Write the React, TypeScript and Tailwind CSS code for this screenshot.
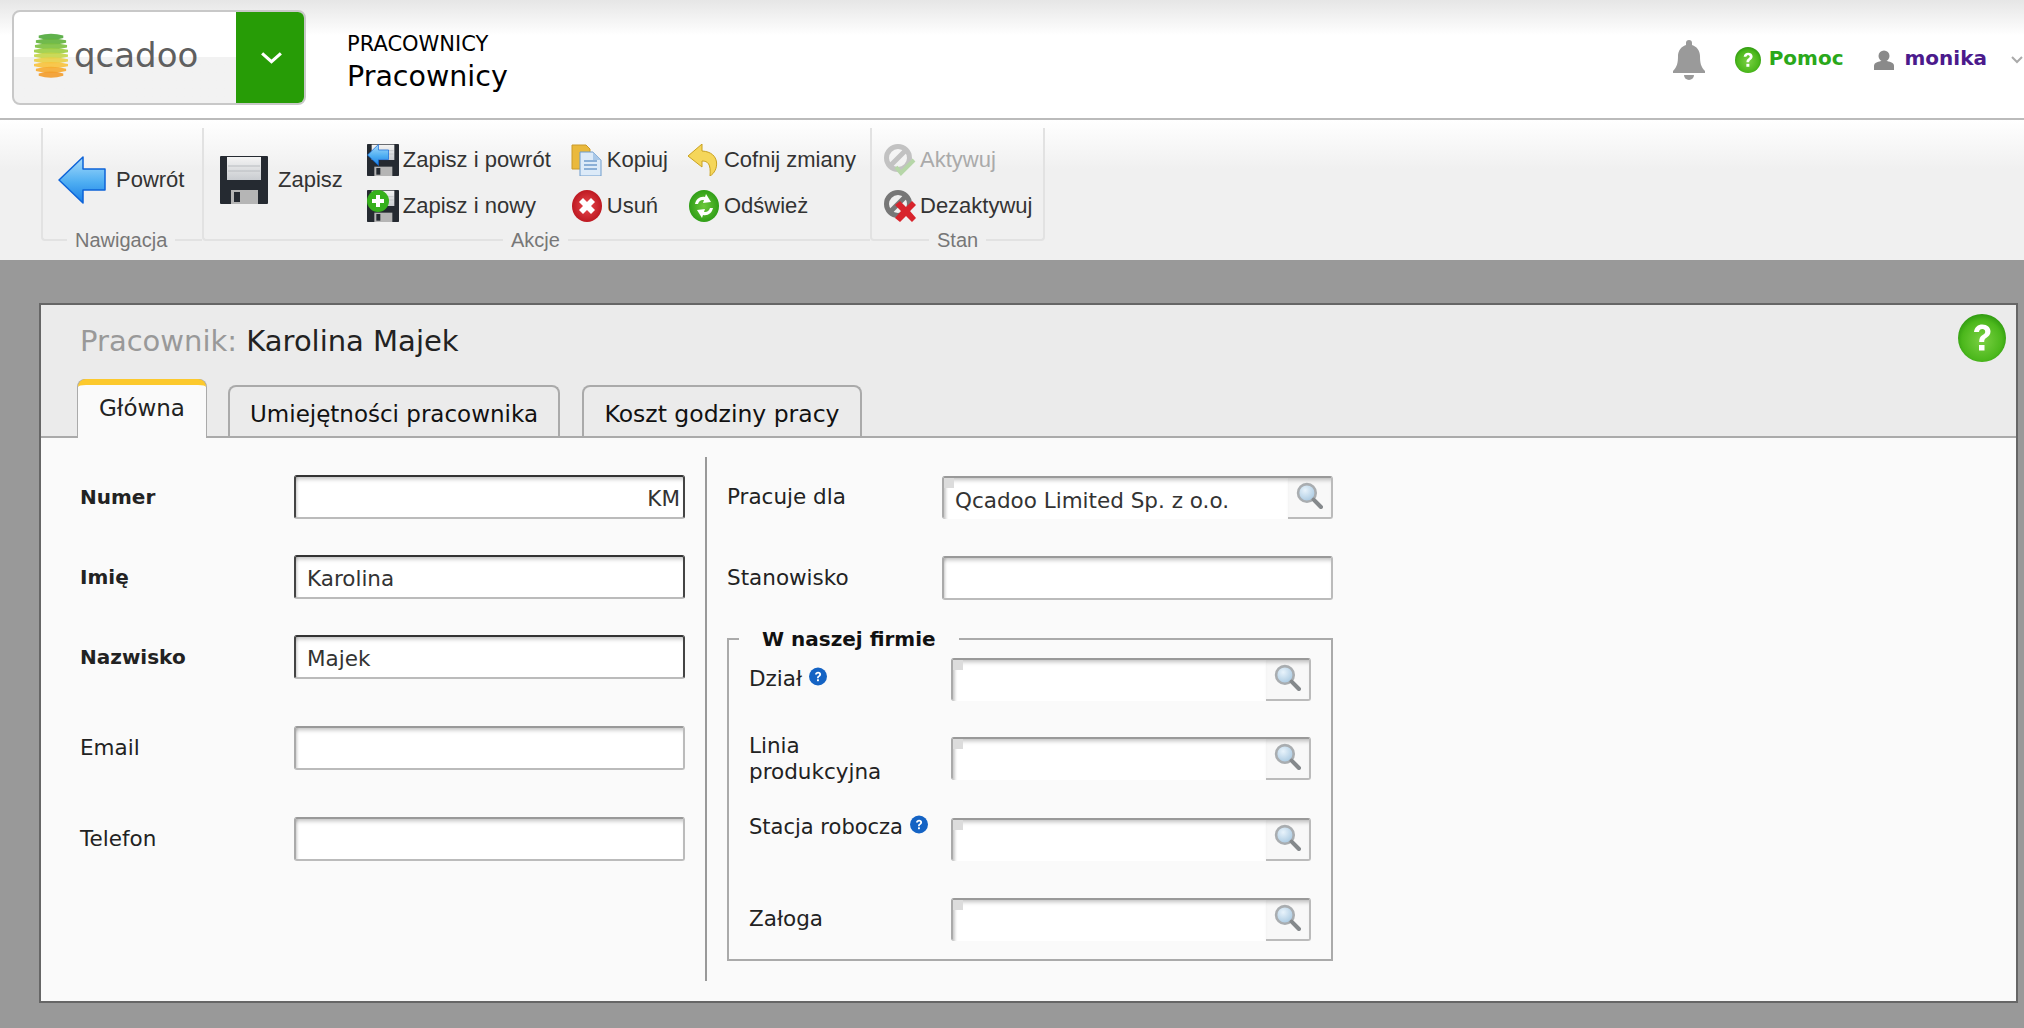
import React from "react";

const dejavu = "font-['DejaVu_Sans',sans-serif]";

function GreenHelp({ className }: { className: string }) {
  return (
    <svg viewBox="0 0 48 48" className={className}>
      <defs>
        <radialGradient id="gh" cx="50%" cy="55%" r="55%">
          <stop offset="0%" stopColor="#7ad043" />
          <stop offset="75%" stopColor="#4cb81c" />
          <stop offset="100%" stopColor="#2f9a10" />
        </radialGradient>
      </defs>
      <circle cx="24" cy="24" r="24" fill="url(#gh)" />
      <path d="M16 18c.6-5 4-7.500 8.300-7.500 5 0 8.200 3 8.200 7 0 3-1.700 4.700-4 6.300-1.800 1.200-2.300 2-2.300 4.200h-5c0-3.500.8-5.200 3.400-7 1.900-1.300 2.600-2 2.600-3.300 0-1.500-1.200-2.600-2.900-2.600-1.900 0-3 1.100-3.300 3z" fill="#fff" />
      <rect x="21" y="31" width="5.500" height="5.500" fill="#fff" />
    </svg>
  );
}

function BlueHelp() {
  return (
    <svg viewBox="0 0 18 18" className="relative -top-[4px] inline-block h-[19px] w-[18px]">
      <circle cx="9" cy="9" r="9" fill="#1463c4" />
      <path d="M6 7c.2-1.800 1.500-2.800 3.100-2.800 1.800 0 3 1.100 3 2.600 0 1.100-.6 1.800-1.500 2.400-.7.400-.8.700-.8 1.500H8c0-1.300.3-1.900 1.200-2.500.7-.500 1-.8 1-1.300 0-.6-.5-1-1.100-1-.7 0-1.100.4-1.200 1.100z" fill="#fff" />
      <rect x="8" y="11.800" width="1.900" height="1.900" fill="#fff" />
    </svg>
  );
}

function Floppy({ className, uid }: { className: string; uid: string }) {
  return (
    <svg viewBox="0 0 48 48" className={className}>
      <defs>
        <linearGradient id={uid} x1="0" y1="0" x2="0" y2="1">
          <stop offset="0%" stopColor="#f4f4f4" />
          <stop offset="100%" stopColor="#c9ccd0" />
        </linearGradient>
      </defs>
      <path d="M1 0h46a1 1 0 0 1 1 1v46a1 1 0 0 1-1 1H1a1 1 0 0 1-1-1V1a1 1 0 0 1 1-1z" fill="#252a31" />
      <rect x="7" y="1" width="34" height="23" fill={`url(#${uid})`} />
      <path d="M8 10h32M8 15h32" stroke="#b9bcc0" strokeWidth="1" />
      <rect x="11" y="34" width="27" height="14" fill="#b5b5b5" />
      <rect x="14" y="36" width="6" height="10" fill="#252a31" />
    </svg>
  );
}

function BlueArrow({ className, uid }: { className: string; uid: string }) {
  return (
    <svg viewBox="0 0 48 48" className={className}>
      <defs>
        <linearGradient id={uid} x1="0" y1="0" x2="0" y2="1">
          <stop offset="0%" stopColor="#a8dcfb" />
          <stop offset="55%" stopColor="#4eaef2" />
          <stop offset="100%" stopColor="#1a7fe6" />
        </linearGradient>
      </defs>
      <path d="M25 1 L1 24 L25 47 V34 H47 V13 H25 Z" fill={`url(#${uid})`} stroke="#0d63d8" strokeWidth="1.500" strokeLinejoin="round" />
    </svg>
  );
}

function SaveBack() {
  return (
    <span className="relative block h-8 w-8">
      <Floppy className="h-8 w-8" uid="f1" />
      <span className="absolute left-0 top-0">
        <BlueArrow className="h-[22px] w-[22px]" uid="a1" />
      </span>
    </span>
  );
}

function SaveNew() {
  return (
    <span className="relative block h-8 w-8">
      <Floppy className="h-8 w-8" uid="f2" />
      <svg viewBox="0 0 22 22" className="absolute left-0 top-0 h-[22px] w-[22px]">
        <circle cx="11" cy="11" r="11" fill="#36b01c" />
        <path d="M9 5h4v4h4v4h-4v4H9v-4H5V9h4z" fill="#fff" />
      </svg>
    </span>
  );
}

function CopyIcon() {
  return (
    <svg viewBox="0 0 32 32" className="h-8 w-8">
      <path d="M1 1h14l4 4v20H1z" fill="#eab93c" stroke="#c99a2a" />
      <path d="M9 8h13l8 8v16H9z" fill="#dceaf8" stroke="#6f9ccc" />
      <path d="M22 8v8h8z" fill="#a9c8e8" />
      <path d="M13 17h13M13 21h13M13 25h13" stroke="#6f9ccc" strokeWidth="1.500" />
    </svg>
  );
}

function DeleteIcon() {
  return (
    <svg viewBox="0 0 32 32" className="h-8 w-8">
      <defs>
        <radialGradient id="del" cx="50%" cy="50%" r="55%">
          <stop offset="0%" stopColor="#ea4a4f" />
          <stop offset="100%" stopColor="#b9141d" />
        </radialGradient>
      </defs>
      <ellipse cx="16" cy="16" rx="15" ry="16" fill="url(#del)" />
      <path d="M8 12l4-4 4 4 4-4 4 4-4 4 4 4-4 4-4-4-4 4-4-4 4-4z" fill="#fff" />
    </svg>
  );
}

function UndoIcon() {
  return (
    <svg viewBox="0 0 32 32" className="h-8 w-8">
      <path d="M14 0 L0 12 L14 23 V17 C20 17 23 20 22 32 C31 27 33 8 14 7 Z" fill="#f5d65a" stroke="#c9a11f" strokeLinejoin="round" />
    </svg>
  );
}

function RefreshIcon() {
  return (
    <svg viewBox="0 0 32 32" className="h-8 w-8">
      <defs>
        <radialGradient id="ref" cx="50%" cy="50%" r="55%">
          <stop offset="0%" stopColor="#6cc83a" />
          <stop offset="100%" stopColor="#2a9a14" />
        </radialGradient>
      </defs>
      <ellipse cx="16" cy="16" rx="15" ry="16" fill="url(#ref)" />
      <path d="M7 14c1-5 5-8 10-7l1-3 5 8-8 1 1-3c-3-.5-5 1-6 4zM25 18c-1 5-5 8-10 7l-1 3-5-8 8-1-1 3c3 .5 5-1 6-4z" fill="#fff" />
    </svg>
  );
}

function ActivateIcon() {
  return (
    <svg viewBox="0 0 32 32" className="h-8 w-8">
      <circle cx="14" cy="14" r="11.500" fill="none" stroke="#c2c2c2" strokeWidth="5" />
      <path d="M6 22L22 6" stroke="#c2c2c2" strokeWidth="5" />
      <path d="M12 23l5 6 13-13" fill="none" stroke="#b6d6a8" strokeWidth="4" />
    </svg>
  );
}

function DeactivateIcon() {
  return (
    <svg viewBox="0 0 32 32" className="h-8 w-8">
      <circle cx="14" cy="14" r="11.500" fill="none" stroke="#777" strokeWidth="5" />
      <path d="M6 22L22 6" stroke="#777" strokeWidth="5" />
      <path d="M11 15l5-4 6 6 6-6 4 4-6 6 6 7-4 4-6-6-6 6-5-4 6-7z" fill="#d8242c" />
    </svg>
  );
}

function SearchIcon() {
  return (
    <svg viewBox="0 0 26 26" className="h-[27px] w-[27px]">
      <defs>
        <radialGradient id="mag" cx="40%" cy="35%" r="70%">
          <stop offset="0%" stopColor="#e8f3fb" />
          <stop offset="100%" stopColor="#a5c6df" />
        </radialGradient>
      </defs>
      <circle cx="10.500" cy="10.500" r="8.500" fill="url(#mag)" stroke="#a9adb0" strokeWidth="2.500" />
      <path d="M17 17l7 7" stroke="#85898c" strokeWidth="4" strokeLinecap="round" />
    </svg>
  );
}

function Logo() {
  // bowed bands, green at the top running into orange at the bottom
  const bands = [
    ["#4fa83a", 4, 13],
    ["#62b23a", 9, 16],
    ["#7cc03e", 14, 17],
    ["#9ccd42", 19, 18],
    ["#c4d548", 24, 18],
    ["#e9cf46", 29, 18],
    ["#f8c23c", 34, 18],
    ["#f6ab30", 39, 16],
    ["#f39c2a", 44, 13],
  ] as const;
  return (
    <svg viewBox="0 0 36 48" className="h-[47px] w-[34px]">
      {bands.map(([c, y, w]) => (
        <path key={y} d={`M${18 - w} ${y}Q18 ${y - 4} ${18 + w} ${y}L${18 + w} ${y + 2.500}Q18 ${y + 6.500} ${18 - w} ${y + 2.500}Z`} fill={c} opacity="0.9" />
      ))}
    </svg>
  );
}

function Tool({ icon, label, disabled, wide }: { icon: React.ReactNode; label: string; disabled?: boolean; wide?: boolean }) {
  return (
    <div className={`flex items-center ${wide ? "gap-[10px]" : "gap-1"}`}>
      {icon}
      <span className={`text-[22px] leading-none ${disabled ? "text-[#aaa]" : "text-[#333]"}`}>{label}</span>
    </div>
  );
}

function Group({ title, width, labelLeft, children }: { title: string; width: string; labelLeft: string; children: React.ReactNode }) {
  return (
    <div className={`relative h-[113px] rounded-bl-[4px] border-b-2 border-l-2 border-[#e2e2e2] ${width}`}>
      {children}
      <span className={`absolute -bottom-[13px] bg-[#f0f0f0] px-2 text-[20px] leading-[24px] text-[#777] ${labelLeft}`}>{title}</span>
    </div>
  );
}

function Field({ value, required, right }: { value?: string; required?: boolean; right?: boolean }) {
  return (
    <input
      readOnly
      value={value ?? ""}
      className={`h-[44px] w-full rounded-[3px] border-2 bg-white pl-[11px] pr-[3px] pt-[3px] text-[21.500px] text-[#333] shadow-[inset_0_5px_4px_-3px_rgba(0,0,0,0.25),inset_4px_0_3px_-3px_rgba(0,0,0,0.2)] outline-none ${dejavu} ${
        required ? "border-[#bbb] border-l-[#444] border-t-[#333] border-r-[#444]" : "border-[#bbb] border-l-[#aaa] border-t-[#999]"
      } ${right ? "text-right" : ""}`}
    />
  );
}

function Lookup({ value }: { value?: string }) {
  return (
    <div className="relative flex h-[43px] w-full rounded-[3px] border-2 border-[#bbb] border-l-[#aaa] border-t-[#999]">
      <input
        readOnly
        value={value ?? ""}
        className={`-mb-[2px] min-w-0 flex-1 bg-white pl-[11px] pt-[6px] text-[21.500px] text-[#333] shadow-[inset_0_5px_4px_-3px_rgba(0,0,0,0.25),inset_5px_0_3px_-3px_rgba(0,0,0,0.2)] outline-none ${dejavu}`}
      />
      <div className="flex w-[43px] shrink-0 items-start justify-center bg-[#f8f8f8] pt-[4px] shadow-[inset_0_5px_4px_-3px_rgba(0,0,0,0.25)]">
        <SearchIcon />
      </div>
      <span className="absolute left-0 top-0 h-[10px] w-[10px] bg-[#dcdcdc]" />
    </div>
  );
}

function FormRow({ label, bold, children, labelWidth }: { label: string; bold?: boolean; children: React.ReactNode; labelWidth: string }) {
  return (
    <div className="flex items-center">
      <div className={`shrink-0 ${labelWidth} ${bold ? "text-[20px] font-bold" : "text-[21.500px]"} text-[#222]`}>{label}</div>
      <div className="flex-1">{children}</div>
    </div>
  );
}

export default function App() {
  return (
    <div className="h-[1028px] w-full overflow-hidden bg-[#999] font-['Liberation_Sans',sans-serif]">
      {/* top bar */}
      <header className="relative flex h-[120px] items-start border-b-2 border-[#bbb] bg-gradient-to-b from-[#e6e6e6] from-0% via-white via-30% to-white pl-3 pt-[10px]">
        <div className="flex h-[95px] w-[294px] overflow-hidden rounded-[8px] border-2 border-[#c8c8c8] bg-gradient-to-b from-white from-50% to-[#f2f2f2] to-50%">
          <div className="flex flex-1 items-center gap-[6px] pb-[6px] pl-5">
            <Logo />
            <span className={`text-[34px] leading-none text-[#5f5f5f] ${dejavu}`}>qcadoo</span>
          </div>
          <div className="-my-[2px] -mr-[2px] flex w-[70px] items-center justify-center bg-[#279c06]">
            <svg viewBox="0 0 24 14" className="h-[15px] w-[25px]">
              <path d="M3 3l9 8 9-8" fill="none" stroke="#fff" strokeWidth="3" />
            </svg>
          </div>
        </div>
        <div className={`ml-[41px] mt-[21px] text-black ${dejavu}`}>
          <div className="text-[21px] leading-[27px]">PRACOWNICY</div>
          <div className="text-[28.500px] leading-[38px]">Pracownicy</div>
        </div>
        <div className={`ml-auto mr-[1px] mt-[30px] flex items-center ${dejavu}`}>
          <svg viewBox="0 0 32 40" className="h-10 w-8">
            <path d="M16 0a3 3 0 0 1 3 3v2c5 1.500 8 6 8 11 0 7 1 11 5 15v2H0v-2c4-4 5-8 5-15 0-5 3-9.500 8-11V3a3 3 0 0 1 3-3z" fill="#9a9a9a" />
            <path d="M11 35h10a5 5 0 0 1-10 0z" fill="#9a9a9a" />
          </svg>
          <span className="ml-[30px]">
            <GreenHelp className="h-[26px] w-[26px]" />
          </span>
          <span className="-mt-1 ml-2 text-[20px] font-bold text-[#2aa81a]">Pomoc</span>
          <svg viewBox="0 0 20 20" className="ml-[30px] h-5 w-5">
            <circle cx="10" cy="6" r="5.500" fill="#8a8a8a" />
            <path d="M0 20v-4c0-3 3-4 7-5h6c4 1 7 2 7 5v4z" fill="#8a8a8a" />
          </svg>
          <span className="-mt-1 ml-[11px] text-[20px] font-bold text-[#4b1a8c]">monika</span>
          <svg viewBox="0 0 12 8" className="ml-6 h-2 w-3">
            <path d="M1 1l5 5 5-5" fill="none" stroke="#aaa" strokeWidth="2" />
          </svg>
        </div>
      </header>

      {/* ribbon */}
      <div className="flex h-[140px] bg-gradient-to-b from-white via-[#f0f0f0] via-35% to-[#f0f0f0] pl-[41px] pt-2">
        <Group title="Nawigacja" width="w-[161px]" labelLeft="left-[24px]">
          <div className="ml-[15px] mt-[28px]">
            <Tool wide icon={<BlueArrow className="h-12 w-12" uid="a0" />} label="Powrót" />
          </div>
        </Group>
        <Group title="Akcje" width="w-[668px]" labelLeft="left-[299px]">
          <div className="ml-4 flex">
            <div className="mt-[28px]">
              <Tool wide icon={<Floppy className="h-12 w-12" uid="f0" />} label="Zapisz" />
            </div>
            <div className="ml-6 mt-4 flex flex-col gap-[14px]">
              <Tool icon={<SaveBack />} label="Zapisz i powrót" />
              <Tool icon={<SaveNew />} label="Zapisz i nowy" />
            </div>
            <div className="ml-5 mt-4 flex flex-col gap-[14px]">
              <Tool icon={<CopyIcon />} label="Kopiuj" />
              <Tool icon={<DeleteIcon />} label="Usuń" />
            </div>
            <div className="ml-5 mt-4 flex flex-col gap-[14px]">
              <Tool icon={<UndoIcon />} label="Cofnij zmiany" />
              <Tool icon={<RefreshIcon />} label="Odśwież" />
            </div>
          </div>
        </Group>
        <Group title="Stan" width="w-[175px] rounded-br-[4px] border-r-2" labelLeft="left-[57px]">
          <div className="ml-3 mt-4 flex flex-col gap-[14px]">
            <Tool disabled icon={<ActivateIcon />} label="Aktywuj" />
            <Tool icon={<DeactivateIcon />} label="Dezaktywuj" />
          </div>
        </Group>
      </div>

      {/* panel */}
      <main className={`relative ml-[39px] mr-[6px] mt-[43px] h-[700px] border-2 border-[#666] bg-[#ebebeb] ${dejavu}`}>
        <div className="absolute right-[10px] top-[9px]">
          <GreenHelp className="h-12 w-12" />
        </div>
        <div className="pl-[39px] pt-[16px] text-[29px] leading-[40px]">
          <span className="text-[#999]">Pracownik:</span> <span className="text-[#222]">Karolina Majek</span>
        </div>

        <div className="flex h-[77px] items-end gap-[22px] border-b-2 border-[#aaa] pl-[37px]">
          <div className="-mb-[2px] flex h-[59px] w-[128px] items-start justify-center rounded-t-[8px] border-t-[6px] border-[#fcc92d] bg-[#fafafa] pt-[9px] text-[23px] leading-[28px] text-[#222] shadow-[1px_0_0_#aaa,-1px_0_0_#aaa]">
            Główna
          </div>
          <div className="flex h-[51px] w-[332px] items-center justify-center rounded-t-[8px] border-2 border-b-0 border-[#aaa] pt-[6px] text-[23px] text-[#111]">
            Umiejętności pracownika
          </div>
          <div className="flex h-[51px] w-[280px] items-center justify-center rounded-t-[8px] border-2 border-b-0 border-[#aaa] pt-[6px] text-[23.500px] text-[#111]">
            Koszt godziny pracy
          </div>
        </div>

        <div className="flex h-[563px] bg-[#fafafa] pt-[19px]">
          {/* left column */}
          <div className="h-[524px] w-[666px] shrink-0 border-r-2 border-[#999] pl-[39px] pr-[20px] pt-[18px]">
            <FormRow label="Numer" bold labelWidth="w-[214px]">
              <Field value="KM" required right />
            </FormRow>
            <div className="mt-[36px]">
              <FormRow label="Imię" bold labelWidth="w-[214px]">
                <Field value="Karolina" required />
              </FormRow>
            </div>
            <div className="mt-[36px]">
              <FormRow label="Nazwisko" bold labelWidth="w-[214px]">
                <Field value="Majek" required />
              </FormRow>
            </div>
            <div className="mt-[47px]">
              <FormRow label="Email" labelWidth="w-[214px]">
                <Field />
              </FormRow>
            </div>
            <div className="mt-[47px]">
              <FormRow label="Telefon" labelWidth="w-[214px]">
                <Field />
              </FormRow>
            </div>
          </div>

          {/* right column */}
          <div className="w-[624px] pl-5 pt-[19px]">
            <div className="w-[606px]">
              <FormRow label="Pracuje dla" labelWidth="w-[215px]">
                <Lookup value="Qcadoo Limited Sp. z o.o." />
              </FormRow>
              <div className="mt-[37px]">
                <FormRow label="Stanowisko" labelWidth="w-[215px]">
                  <Field />
                </FormRow>
              </div>
              <fieldset className="mt-[27px] border-2 border-[#aaa] pb-[18px] pl-5 pr-5 pt-[7px]">
                <legend className="-ml-[10px] px-[23px] text-[20px] font-bold leading-[24px] text-[#111]">W naszej firmie</legend>
                <div className="flex h-[43px] items-center">
                  <div className="w-[202px] shrink-0 text-[21.500px] text-[#222]">
                    Dział <BlueHelp />
                  </div>
                  <div className="flex-1">
                    <Lookup />
                  </div>
                </div>
                <div className="mt-9 flex h-[43px] items-center">
                  <div className="w-[202px] shrink-0 text-[21.500px] leading-[26px] text-[#222]">
                    Linia
                    <br />
                    produkcyjna
                  </div>
                  <div className="flex-1">
                    <Lookup />
                  </div>
                </div>
                <div className="mt-[38px] flex h-[43px] items-start">
                  <div className="-mt-[6px] w-[202px] shrink-0 whitespace-nowrap text-[21px] text-[#222]">
                    Stacja robocza <BlueHelp />
                  </div>
                  <div className="flex-1">
                    <Lookup />
                  </div>
                </div>
                <div className="mt-[37px] flex h-[43px] items-center">
                  <div className="w-[202px] shrink-0 text-[21.500px] text-[#222]">Załoga</div>
                  <div className="flex-1">
                    <Lookup />
                  </div>
                </div>
              </fieldset>
            </div>
          </div>
        </div>
      </main>
    </div>
  );
}
